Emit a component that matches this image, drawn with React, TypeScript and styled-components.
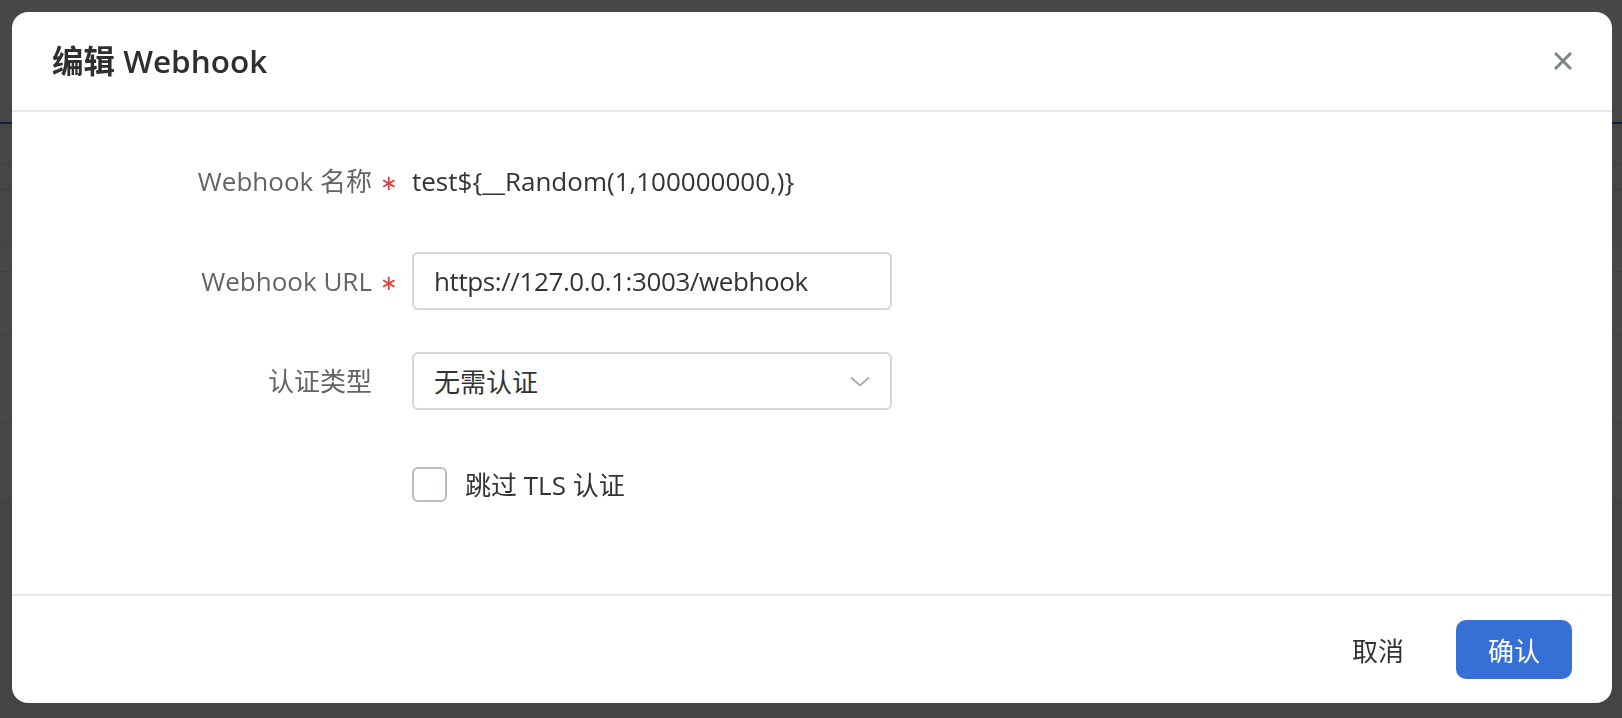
import React from 'react';
import styled, { createGlobalStyle } from 'styled-components';

const GlobalStyle = createGlobalStyle`
  html, body {
    margin: 0;
    padding: 0;
    width: 100%;
    height: 100%;
    overflow: hidden;
  }
  body {
    font-family: "Open Sans", "Noto Sans CJK SC", sans-serif;
    background: #f0f2f5;
  }
  * { box-sizing: border-box; }
`;

/* ---------- background page (behind the mask) ---------- */
const Page = styled.div`
  width: 1622px;
  height: 718px;
  background: #f0f2f5;
  display: flex;
  flex-direction: column;
`;

const TopBar = styled.div`
  height: 124px;
  background: #ffffff;
  border-bottom: 2px solid #3670d7;
`;

const Table = styled.div`
  background: #ffffff;
  display: flex;
  flex-direction: column;
`;

const TableRow = styled.div<{ $h: number; $bg?: string }>`
  height: ${(p) => p.$h}px;
  background: ${(p) => p.$bg || '#ffffff'};
  border-bottom: 1px solid #e3e5ea;
`;

/* ---------- modal ---------- */
const Mask = styled.div`
  position: fixed;
  inset: 0;
  background: rgba(0, 0, 0, 0.72);
  display: flex;
  align-items: flex-start;
  justify-content: flex-start;
  padding: 12px 0 0 12px;
`;

const Modal = styled.div`
  width: 1600px;
  background: #ffffff;
  border-radius: 16px;
  display: flex;
  flex-direction: column;
  overflow: hidden;
`;

const Header = styled.div`
  height: 100px;
  padding: 0 40px;
  display: flex;
  align-items: center;
  justify-content: space-between;
  border-bottom: 2px solid #e7e7ee;
`;

const Title = styled.h2`
  margin: 0;
  font-size: 31.5px;
  font-weight: 600;
  color: #2f2f2f;
  line-height: 40px;
`;

const CloseButton = styled.button`
  width: 18px;
  height: 18px;
  padding: 0;
  border: none;
  background: transparent;
  display: flex;
  cursor: pointer;
`;

const Body = styled.div`
  padding: 40px 40px 81px;
  display: flex;
  flex-direction: column;
  gap: 42px;
`;

const FormItem = styled.div<{ $shift?: number }>`
  display: flex;
  align-items: center;
  gap: 40px;
  min-height: 58px;
  margin-top: ${(p) => p.$shift || 0}px;
`;

const Label = styled.label`
  width: 320px;
  display: flex;
  justify-content: flex-end;
  font-size: 26px;
  line-height: 36px;
  color: #646464;
`;

const LabelText = styled.span`
  position: relative;
`;

const Required = styled.span`
  position: absolute;
  left: calc(100% + 8px);
  top: 50%;
  transform: translateY(-42%);
  font-family: "DejaVu Sans", sans-serif;
  font-size: 21px;
  line-height: 22px;
  color: #e23b3b;
`;

const ValueText = styled.span`
  font-size: 26px;
  line-height: 36px;
  color: #333333;
`;

const TextInput = styled.input`
  width: 480px;
  height: 58px;
  border: 2px solid #d4d6dc;
  border-radius: 6px;
  padding: 0 20px;
  font: inherit;
  font-size: 26px;
  letter-spacing: -0.4px;
  color: #333333;
  outline: none;
  background: #fff;
`;

const SelectBox = styled.div`
  width: 480px;
  height: 58px;
  border: 2px solid #d4d6dc;
  border-radius: 6px;
  padding: 0 20px;
  display: flex;
  align-items: center;
  justify-content: space-between;
  font-size: 26px;
  color: #333333;
  background: #fff;
`;

const CheckRow = styled.label`
  display: flex;
  align-items: center;
  gap: 18px;
  font-size: 26px;
  color: #333333;
`;

const CheckBox = styled.span`
  width: 35px;
  height: 35px;
  border: 2px solid #b9bdc4;
  border-radius: 6px;
  background: #fff;
`;

const Footer = styled.div`
  border-top: 2px solid #e7e7ee;
  padding: 24px 40px;
  display: flex;
  justify-content: flex-end;
  gap: 20px;
`;

const Button = styled.button<{ $primary?: boolean }>`
  height: 59px;
  padding: 0 32px;
  border: none;
  border-radius: 10px;
  font: inherit;
  font-size: 26px;
  color: ${(p) => (p.$primary ? '#ffffff' : '#333333')};
  background: ${(p) => (p.$primary ? '#3670d7' : 'transparent')};
  cursor: pointer;
`;

const CloseIcon = () => (
  <svg width="18" height="18" viewBox="0 0 18 18">
    <path d="M1 1 L17 17 M17 1 L1 17" stroke="#7f8489" strokeWidth="3" fill="none" />
  </svg>
);

const Chevron = () => (
  <svg width="20" height="11" viewBox="0 0 20 11">
    <polyline points="1,1.5 10,9.5 19,1.5" stroke="#a9adb4" strokeWidth="2" fill="none" />
  </svg>
);

export default function App() {
  return (
    <>
      <GlobalStyle />
      <Page>
        <TopBar />
        <Table>
          <TableRow $h={40} />
          <TableRow $h={26} />
          <TableRow $h={57} $bg="#fafafa" />
          <TableRow $h={25} />
          <TableRow $h={63} />
          <TableRow $h={88} />
          <TableRow $h={78} />
        </Table>
      </Page>
      <Mask>
        <Modal>
          <Header>
            <Title>编辑 Webhook</Title>
            <CloseButton aria-label="关闭">
              <CloseIcon />
            </CloseButton>
          </Header>
          <Body>
            <FormItem>
              <Label>
                <LabelText>
                  Webhook 名称<Required>∗</Required>
                </LabelText>
              </Label>
              <ValueText>test${'{'}__Random(1,100000000,){'}'}</ValueText>
            </FormItem>
            <FormItem>
              <Label>
                <LabelText>
                  Webhook URL<Required>∗</Required>
                </LabelText>
              </Label>
              <TextInput defaultValue="https://127.0.0.1:3003/webhook" />
            </FormItem>
            <FormItem>
              <Label>
                <LabelText>认证类型</LabelText>
              </Label>
              <SelectBox>
                <span>无需认证</span>
                <Chevron />
              </SelectBox>
            </FormItem>
            <FormItem $shift={3}>
              <Label />
              <CheckRow>
                <CheckBox />
                <span>跳过 TLS 认证</span>
              </CheckRow>
            </FormItem>
          </Body>
          <Footer>
            <Button>取消</Button>
            <Button $primary>确认</Button>
          </Footer>
        </Modal>
      </Mask>
    </>
  );
}
